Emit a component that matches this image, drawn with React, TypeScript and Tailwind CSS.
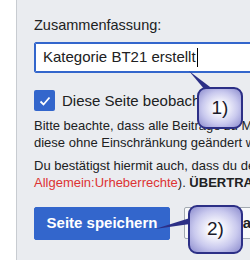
import React from 'react'

function Callout({ label, className }: { label: string; className: string }) {
  return (
    <div
      className={`absolute flex items-center justify-center rounded-[9px] border-2 border-[#2c2f86] bg-[radial-gradient(ellipse_at_center,#ffffff_15%,#c9c9ee_60%,#8a8acd_100%)] text-[19px] text-[#1b1b2a] ${className}`}
    >
      {label}
    </div>
  )
}

export default function App() {
  return (
    <div className="relative w-[250px] h-[260px] overflow-hidden bg-white font-['Liberation_Sans',Arial,sans-serif]">
      <div className="ml-[16px] w-[700px] h-full border-l border-[#c8ccd1] bg-[#eaecf0] pl-[17px] pt-[15px] text-[#202122]">
        <div className="text-[14.5px] leading-[20px]">Zusammenfassung:</div>

        <div className="mt-[7px] flex h-[31px] w-[600px] items-center rounded-[2px] border border-[#36c] bg-white pl-[8px] text-[15px] shadow-[inset_0_0_0_1px_#36c]">
          Kategorie BT21 erstellt
          <span className="ml-[1px] inline-block h-[19px] w-px bg-black" />
        </div>

        <div className="mt-[17px] flex h-[21px] items-center gap-[7px]">
          <span className="flex h-[21px] w-[21px] items-center justify-center rounded-[2px] bg-[#36c]">
            <svg width="14" height="14" viewBox="0 0 14 14" fill="none">
              <path d="M2.5 7.5 L5.5 10.5 L11.5 3.5" stroke="white" strokeWidth="1.8" />
            </svg>
          </span>
          <span className="text-[15px] leading-[21px] whitespace-nowrap">Diese Seite beobachten</span>
        </div>

        <p className="mt-[7px] whitespace-nowrap text-[13px] leading-[16.5px]">
          Bitte beachte, dass alle Beiträge zu MediaWiki von anderen Mitwirkenden bearbeitet, geändert oder gelöscht werden können. Reiche hier keine Texte ein, falls du nicht willst, dass
          <br />
          diese ohne Einschränkung geändert werden können.
        </p>
        <p className="mt-[7px] whitespace-nowrap text-[13px] leading-[16.5px]">
          Du bestätigst hiermit auch, dass du den Beitrag selbst geschrieben hast bzw. ihn aus einer gemeinfreien Quelle kopiert hast (siehe
          <br />
          <span className="text-[#d33]">Allgemein:Urheberrechte</span>). <b>ÜBERTRAGE OHNE GENEHMIGUNG KEINE URHEBERRECHTLICH GESCHÜTZTEN INHALTE!</b>
        </p>

        <div className="mt-[16px] flex gap-[14px]">
          <button className="h-[33px] w-[136px] rounded-[2px] border border-[#36c] bg-[#36c] text-[15px] font-bold text-white">
            Seite speichern
          </button>
          <button className="h-[32px] rounded-[2px] border border-[#a2a9b1] bg-[#f8f9fa] px-[8px] text-[15px] font-bold text-[#202122]">
            Vorschau zeigen
          </button>
        </div>
      </div>

      <svg className="absolute left-0 top-0" width="250" height="260">
        <polygon points="189,71 205,90 214,90" fill="#2c2f86" />
        <polygon points="155,229 190,218 190,224" fill="#2c2f86" />
      </svg>
      <Callout label="1)" className="left-[197px] top-[87px] h-[42px] w-[46px]" />
      <Callout label="2)" className="left-[188px] top-[205px] h-[49px] w-[55px]" />
    </div>
  )
}
